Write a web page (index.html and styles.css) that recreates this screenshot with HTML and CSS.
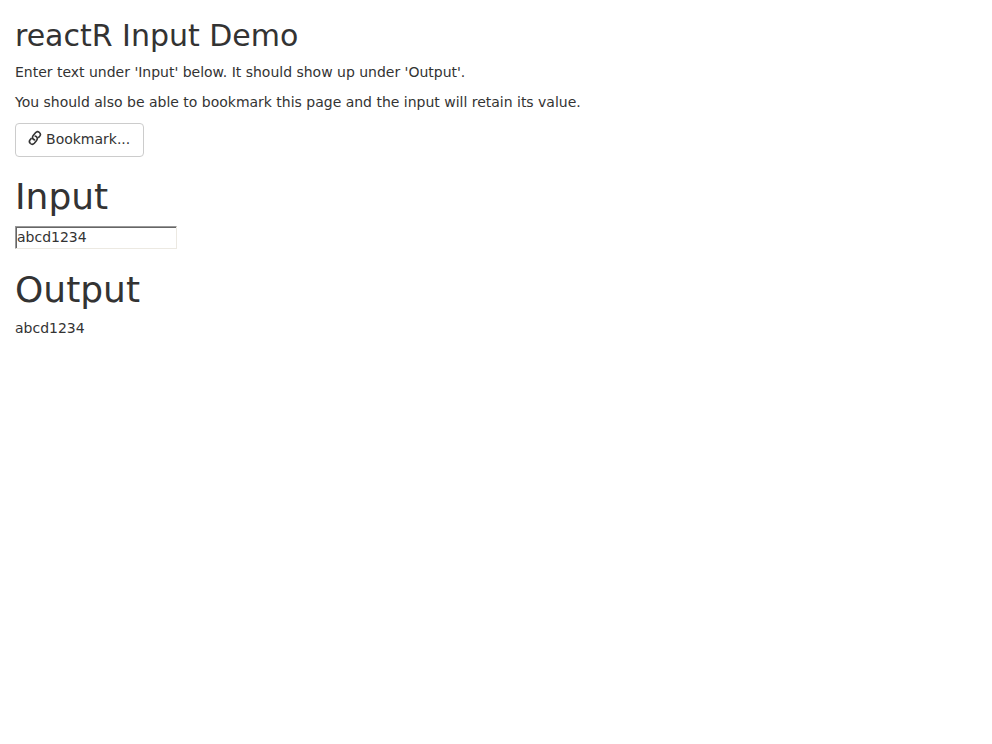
FILE: index.html
```html
<!DOCTYPE html>
<html lang="en">
<head>
<meta charset="utf-8">
<title>reactR Input Demo</title>
<link rel="stylesheet" href="styles.css">
</head>
<body>
<main class="container">
  <h2 class="title">reactR Input Demo</h2>
  <p>Enter text under 'Input' below. It should show up under 'Output'.</p>
  <p>You should also be able to bookmark this page and the input will retain its value.</p>
  <button class="btn" type="button"><svg class="icon" viewBox="0 0 14 14" aria-hidden="true"><g fill="none" stroke="currentColor" stroke-width="1.6"><path d="M7.2 9C5.8 8.8 4.6 7.8 4.5 6.6C4.4 5.7 4.8 5 5.4 4.3L7.5 1.8C8.7 .5 10.2 .5 11.4 1.5C12.6 2.6 12.7 4 11.7 5.2L10.2 6.9"/><path d="M6.6 5C8 5.2 9.2 6.2 9.3 7.4C9.4 8.3 9 9 8.4 9.7L6.3 12.2C5.1 13.5 3.6 13.5 2.4 12.5C1.2 11.4 1.1 10 2.1 8.8L3.6 7.1"/></g></svg> Bookmark...</button>
  <h1>Input</h1>
  <input class="field" type="text" value="abcd1234">
  <h1 class="output-title">Output</h1>
  <div>abcd1234</div>
</main>
</body>
</html>
```
FILE: styles.css
```css
* { box-sizing: border-box; }
body {
  margin: 0;
  font: 14px/20px "DejaVu Sans", sans-serif;
  letter-spacing: -0.01px;
  color: #333;
  background: #fff;
}
.container { padding: 0 15px; }
h1, h2 {
  font-weight: 500;
  line-height: 1.1;
}
h1 { margin: 20px 0 9px; font-size: 36px; }
h2 { margin: 19px 0 10px; font-size: 30px; }
.output-title { margin-top: 21px; }
p { margin: 0 0 10px; }
.btn {
  display: block;
  width: 129px;
  height: 34px;
  margin-top: 11px;
  padding: 5px 12px 7px;
  border: 1px solid #ccc;
  border-radius: 4px;
  background: #fff;
  color: #333;
  font: inherit;
  letter-spacing: inherit;
  text-align: left;
  white-space: nowrap;
}
.icon {
  display: inline-block;
  width: 14px;
  height: 14px;
  margin-right: -0.4px;
  overflow: visible;
  vertical-align: -1px;
}
.field {
  display: block;
  width: 162px;
  height: 23px;
  padding: 0 1px 1px;
  border: 1px solid;
  border-color: #999 #ece9e2 #ece9e2 #999;
  box-shadow: inset 1px 1px #666;
  background: #fff;
  color: #333;
  font: inherit;
  letter-spacing: inherit;
}
```
